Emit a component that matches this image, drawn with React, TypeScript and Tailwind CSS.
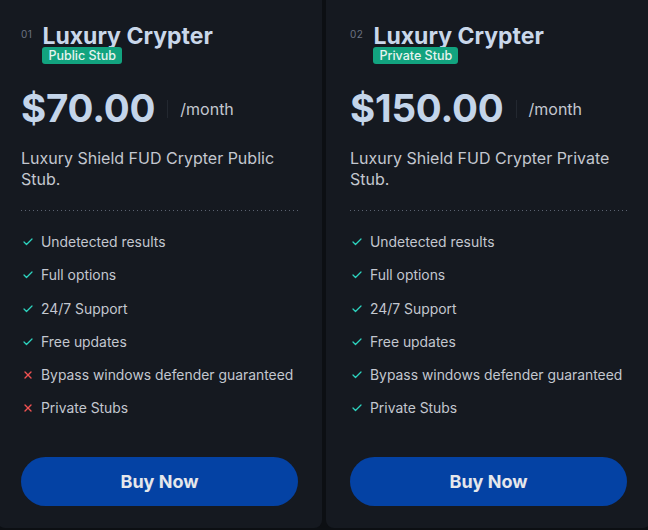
import { Check, X } from 'lucide-react';

interface Feature {
  label: string;
  included: boolean;
}

interface Plan {
  index: string;
  name: string;
  badge: string;
  price: string;
  description: string;
  features: Feature[];
}

const plans: Plan[] = [
  {
    index: '01',
    name: 'Luxury Crypter',
    badge: 'Public Stub',
    price: '$70.00',
    description: 'Luxury Shield FUD Crypter Public Stub.',
    features: [
      { label: 'Undetected results', included: true },
      { label: 'Full options', included: true },
      { label: '24/7 Support', included: true },
      { label: 'Free updates', included: true },
      { label: 'Bypass windows defender guaranteed', included: false },
      { label: 'Private Stubs', included: false },
    ],
  },
  {
    index: '02',
    name: 'Luxury Crypter',
    badge: 'Private Stub',
    price: '$150.00',
    description: 'Luxury Shield FUD Crypter Private Stub.',
    features: [
      { label: 'Undetected results', included: true },
      { label: 'Full options', included: true },
      { label: '24/7 Support', included: true },
      { label: 'Free updates', included: true },
      { label: 'Bypass windows defender guaranteed', included: true },
      { label: 'Private Stubs', included: true },
    ],
  },
];

function PlanCard({ plan }: { plan: Plan }) {
  return (
    <div className="w-[325px] shrink-0 bg-[#151920] rounded-lg px-6 pt-[32px] pb-[22px] flex flex-col">
      {/* Header */}
      <div className="flex items-start gap-[10px]">
        <span className="text-[10px] leading-none text-[#6b7280] mt-[5px] tracking-wider">{plan.index}</span>
        <div className="flex flex-col items-start">
          <h3 className="text-[23px] leading-6 font-bold text-[#c9d7ea]">{plan.name}</h3>
          <span className="-mt-[1px] bg-[#12a37f] text-[#e6f4ef] text-[12.5px] leading-[17px] font-medium px-[6px] rounded-[3px]">
            {plan.badge}
          </span>
        </div>
      </div>

      {/* Price */}
      <div className="flex items-center mt-[24px]">
        <span className="text-[38.5px] leading-10 font-bold text-[#c4d5ea] tracking-[-0.2px]">{plan.price}</span>
        <span className="w-px h-[18px] bg-[#232830] mx-[12px] mt-[2px]" />
        <span className="text-[16px] text-[#c3c7cf] mt-[1px]">/month</span>
      </div>

      {/* Description */}
      <p className="mt-[20px] text-[16px] leading-[21px] text-[#c3c7cf] pr-2">{plan.description}</p>

      <div className="mt-[20px] h-px bg-[linear-gradient(to_right,#5b6270_1px,transparent_1px)] bg-[length:4px_1px]" />

      {/* Features */}
      <ul className="mt-[21px] flex flex-col gap-[13.3px]">
        {plan.features.map((f) => (
          <li key={f.label} className="flex items-center gap-[7px] text-[13.9px] leading-5 text-[#c3c7cf]">
            {f.included ? (
              <Check className="w-[12px] h-[12px] text-[#2dd4bf] ml-[1px]" strokeWidth={2.5} />
            ) : (
              <X className="w-[12px] h-[12px] text-[#f05252] ml-[1px]" strokeWidth={2.75} />
            )}
            <span>{f.label}</span>
          </li>
        ))}
      </ul>

      <button className="mt-[39px] h-[49px] w-full rounded-full bg-[#0442a4] text-[18px] font-bold text-[#e5e7eb]">
        Buy Now
      </button>
    </div>
  );
}

export default function App() {
  return (
    <div
      className="w-[648px] h-[530px] overflow-hidden bg-[#0c0f13]"
      style={{ fontFamily: 'Inter, "Noto Sans", sans-serif' }}
    >
      <div className="flex gap-1 -ml-[3px] -mt-[8px]">
        {plans.map((p) => (
          <PlanCard key={p.index} plan={p} />
        ))}
      </div>
    </div>
  );
}
